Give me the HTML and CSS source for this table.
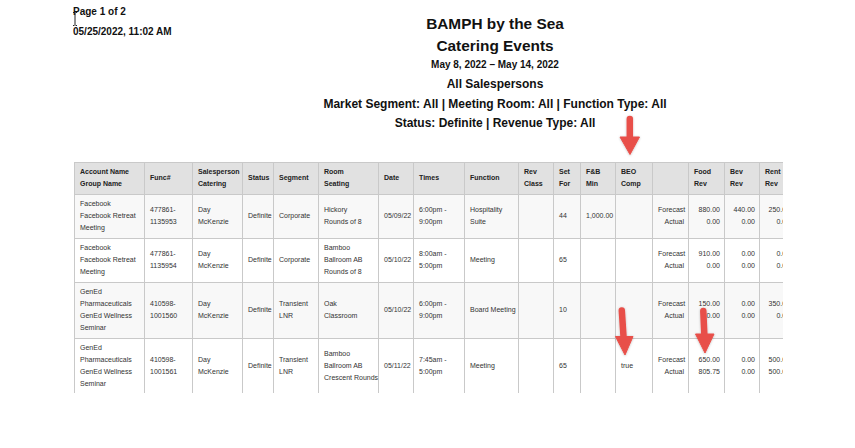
FILE: index.html
```html
<!DOCTYPE html>
<html lang="en">
<head>
<meta charset="utf-8">
<title>BAMPH by the Sea - Catering Events</title>
<link rel="stylesheet" href="styles.css">
</head>
<body>
<div class="page">
  <header class="report-head">
    <div class="page-info">
      <div class="page-num">Page 1 of 2</div>
      <div class="page-date">05/25/2022, 11:02 AM</div>
    </div>
    <div class="titles">
      <div class="t-main">BAMPH by the Sea</div>
      <div class="t-main">Catering Events</div>
      <div class="t-range">May 8, 2022 – May 14, 2022</div>
      <div class="t-sub">All Salespersons</div>
      <div class="t-sub">Market Segment: All | Meeting Room: All | Function Type: All</div>
      <div class="t-sub">Status: Definite | Revenue Type: All</div>
    </div>
    <div></div>
  </header>

  <div class="table-wrap">
    <table class="events">
      <colgroup>
        <col class="c70"><col class="c48"><col class="c50"><col class="c31"><col class="c45"><col class="c60"><col class="c35"><col class="c51"><col class="c54"><col class="c35"><col class="c27"><col class="c35"><col class="c37"><col class="c36"><col class="c36"><col class="c35"><col class="c35">
      </colgroup>
      <thead>
        <tr>
          <th>Account Name<br>Group Name</th>
          <th>Func#</th>
          <th>Salesperson<br>Catering</th>
          <th>Status</th>
          <th>Segment</th>
          <th>Room<br>Seating</th>
          <th>Date</th>
          <th>Times</th>
          <th>Function</th>
          <th>Rev<br>Class</th>
          <th>Set<br>For</th>
          <th>F&amp;B<br>Min</th>
          <th>BEO<br>Comp</th>
          <th></th>
          <th>Food<br>Rev</th>
          <th>Bev<br>Rev</th>
          <th>Rent<br>Rev</th>
        </tr>
      </thead>
      <tbody>
        <tr class="odd">
          <td>Facebook<br>Facebook Retreat<br>Meeting</td>
          <td>477861-<br>1135953</td>
          <td>Day<br>McKenzie</td>
          <td>Definite</td>
          <td>Corporate</td>
          <td>Hickory<br>Rounds of 8</td>
          <td>05/09/22</td>
          <td>6:00pm -<br>9:00pm</td>
          <td>Hospitality<br>Suite</td>
          <td></td>
          <td>44</td>
          <td>1,000.00</td>
          <td></td>
          <td class="num">Forecast<br>Actual</td>
          <td class="num">880.00<br>0.00</td>
          <td class="num">440.00<br>0.00</td>
          <td class="num">250.00<br>0.00</td>
        </tr>
        <tr>
          <td>Facebook<br>Facebook Retreat<br>Meeting</td>
          <td>477861-<br>1135954</td>
          <td>Day<br>McKenzie</td>
          <td>Definite</td>
          <td>Corporate</td>
          <td>Bamboo<br>Ballroom AB<br>Rounds of 8</td>
          <td>05/10/22</td>
          <td>8:00am -<br>5:00pm</td>
          <td>Meeting</td>
          <td></td>
          <td>65</td>
          <td></td>
          <td></td>
          <td class="num">Forecast<br>Actual</td>
          <td class="num">910.00<br>0.00</td>
          <td class="num">0.00<br>0.00</td>
          <td class="num">0.00<br>0.00</td>
        </tr>
        <tr class="odd">
          <td>GenEd<br>Pharmaceuticals<br>GenEd Wellness<br>Seminar</td>
          <td>410598-<br>1001560</td>
          <td>Day<br>McKenzie</td>
          <td>Definite</td>
          <td>Transient<br>LNR</td>
          <td>Oak<br>Classroom</td>
          <td>05/10/22</td>
          <td>6:00pm -<br>9:00pm</td>
          <td>Board Meeting</td>
          <td></td>
          <td>10</td>
          <td></td>
          <td></td>
          <td class="num">Forecast<br>Actual</td>
          <td class="num">150.00<br>0.00</td>
          <td class="num">0.00<br>0.00</td>
          <td class="num">350.00<br>0.00</td>
        </tr>
        <tr>
          <td>GenEd<br>Pharmaceuticals<br>GenEd Wellness<br>Seminar</td>
          <td>410598-<br>1001561</td>
          <td>Day<br>McKenzie</td>
          <td>Definite</td>
          <td>Transient<br>LNR</td>
          <td>Bamboo<br>Ballroom AB<br>Crescent Rounds</td>
          <td>05/11/22</td>
          <td>7:45am -<br>5:00pm</td>
          <td>Meeting</td>
          <td></td>
          <td>65</td>
          <td></td>
          <td>true</td>
          <td class="num">Forecast<br>Actual</td>
          <td class="num">650.00<br>805.75</td>
          <td class="num">0.00<br>0.00</td>
          <td class="num">500.00<br>500.00</td>
        </tr>
      </tbody>
    </table>
  </div>

  <svg class="cursor" width="6" height="14" viewBox="0 0 6 14">
    <path d="M1 0.5h1.5M3.5 0.5h1.5M3 1v12M1 13.5h1.5M3.5 13.5h1.5" stroke="#222" stroke-width="1" fill="none"/>
  </svg>

  <svg class="arrows" width="855" height="448" viewBox="0 0 855 448">
    <defs>
      <filter id="sh" x="-50%" y="-50%" width="200%" height="200%">
        <feDropShadow dx="0" dy="0.5" stdDeviation="1" flood-color="#000" flood-opacity="0.25"/>
      </filter>
    </defs>
    <g fill="#e8504a" stroke="#e8504a" filter="url(#sh)">
      <line x1="629.8" y1="119" x2="629.8" y2="138" stroke-width="6.5" stroke-linecap="round"/>
      <polygon points="620,137 639.5,137 630,154.5" stroke-width="1" stroke-linejoin="round"/>
      <line x1="621.8" y1="310.5" x2="623.6" y2="338" stroke-width="6.5" stroke-linecap="round"/>
      <polygon points="615.5,336.5 633,336.5 625,355" stroke-width="1" stroke-linejoin="round"/>
      <line x1="703.3" y1="311" x2="704.4" y2="336" stroke-width="6.5" stroke-linecap="round"/>
      <polygon points="695.5,334 714,334 705,353" stroke-width="1" stroke-linejoin="round"/>
    </g>
  </svg>
</div>
</body>
</html>
```

FILE: styles.css
```css
* { box-sizing: border-box; }

html, body {
  margin: 0;
  padding: 0;
  background: #ffffff;
}

body {
  font-family: "Liberation Sans", Arial, sans-serif;
  color: #1a1a1a;
  overflow: hidden;
  width: 855px;
  height: 448px;
}

.page {
  position: relative;
  width: 855px;
  height: 448px;
  overflow: hidden;
}

.report-head {
  display: grid;
  grid-template-columns: 1fr auto 1fr;
  width: 844px;
  margin-left: 73px;
}

.page-info {
  font-weight: bold;
  font-size: 10px;
  line-height: 12px;
  color: #111;
  white-space: nowrap;
}

.page-num { margin-top: 6px; }
.page-date { margin-top: 8px; }

.titles {
  text-align: center;
  font-weight: bold;
  color: #111;
  white-space: nowrap;
  padding-top: 13px;
}

.t-main {
  font-size: 15.4px;
  line-height: 22px;
}

.t-range {
  font-size: 10px;
  line-height: 16px;
}

.t-sub {
  font-size: 12px;
  line-height: 19.5px;
}

.t-range + .t-sub { margin-top: 2px; }

.table-wrap {
  margin-top: 28px;
  margin-left: 74px;
  width: 709px;
  height: 231px;
  overflow: hidden;
}

.events {
  table-layout: fixed;
  border-collapse: collapse;
  width: 720px;
  font-size: 7px;
  line-height: 12px;
  color: #333;
}

.c70 { width: 70px; }
.c48 { width: 48px; }
.c50 { width: 50px; }
.c31 { width: 31px; }
.c45 { width: 45px; }
.c60 { width: 60px; }
.c35 { width: 35px; }
.c51 { width: 51px; }
.c54 { width: 54px; }
.c27 { width: 27px; }
.c37 { width: 37px; }
.c36 { width: 36px; }

.events th,
.events td {
  border: 1px solid #c9c9c9;
  padding: 3.5px 4px 3.5px 5px;
  vertical-align: middle;
  text-align: left;
  white-space: nowrap;
  overflow: visible;
}

.events th {
  background: #e1e1e1;
  color: #222;
  font-weight: bold;
}

.events tr.odd td { background: #f8f8f8; }

.events td.num { text-align: right; }

.cursor {
  position: absolute;
  left: 72px;
  top: 12px;
}

.arrows {
  position: absolute;
  left: 0;
  top: 0;
  pointer-events: none;
}
```
